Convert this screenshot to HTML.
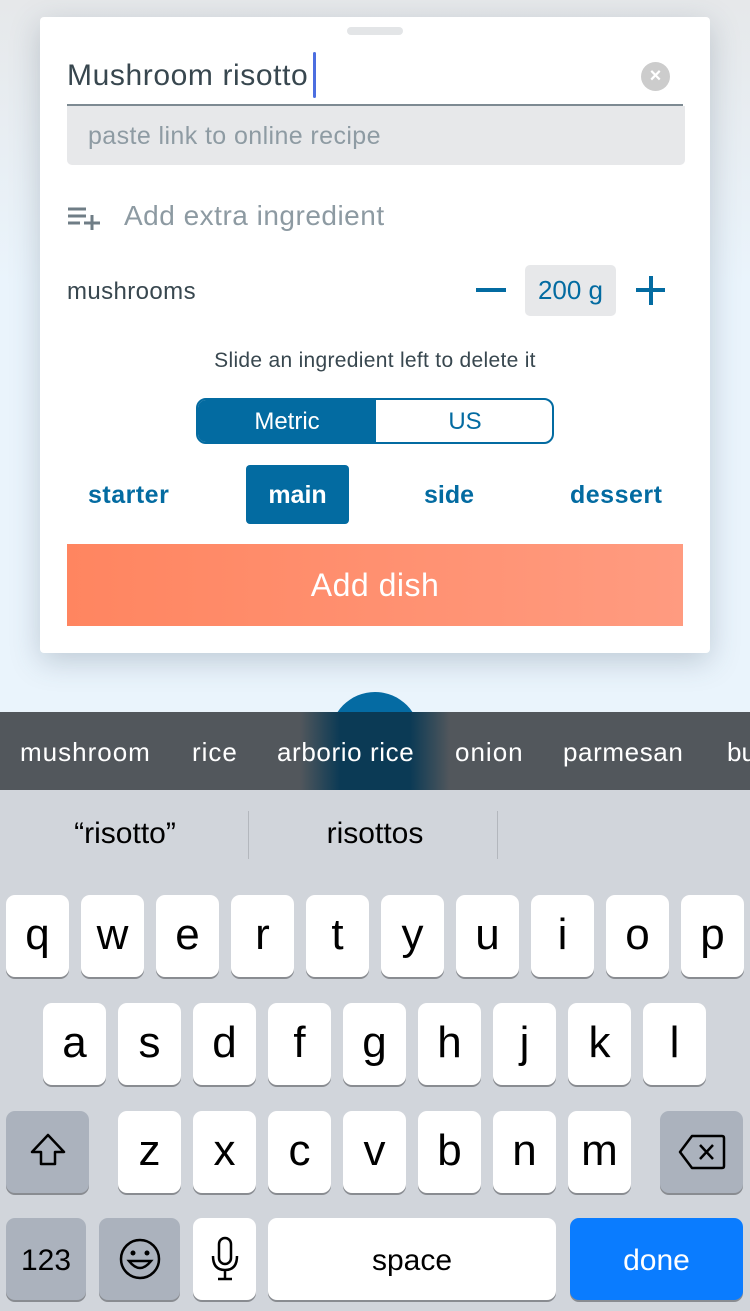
<!DOCTYPE html>
<html><head><style>
*{margin:0;padding:0;box-sizing:border-box}
body{width:750px;height:1311px;position:relative;overflow:hidden;background:#eaf3fb;font-family:"Liberation Sans",sans-serif}
.a{position:absolute}
.card{left:40px;top:17px;width:670px;height:636px;background:#fff;border-radius:4px;box-shadow:0 8px 30px rgba(60,80,100,.25)}
.k{position:absolute;background:#fff;border-radius:9px;box-shadow:0 2px 0 #898c91;text-align:center;font-size:44px;color:#000;line-height:80px;width:63px;height:82px}
.g{background:#abb2bd}
.bt{color:#036ba1;font-size:25px;font-weight:bold}
.s{position:absolute;top:737px;font-size:26px;color:#fff;white-space:nowrap}
</style></head><body>
<div class="a" style="left:0;top:0;width:750px;height:712px;background:linear-gradient(#e6e8ea,#eaf4fc 40%)"></div>
<div class="a card"></div>
<div class="a" style="left:347px;top:27px;width:56px;height:8px;border-radius:4px;background:#e3e5e7"></div>
<div class="a" style="left:67px;top:59px;font-size:30px;color:#38474f;letter-spacing:0.6px;transform:scaleX(1.0)">Mushroom risotto</div>
<div class="a" style="left:313px;top:52px;width:3px;height:46px;background:#4c6ee0;border-radius:2px"></div>
<div class="a" style="left:641px;top:62px;width:29px;height:29px;border-radius:50%;background:#ccc;color:#fff;text-align:center;font-size:20px;line-height:28px;font-weight:bold">×</div>
<div class="a" style="left:67px;top:104px;width:616px;height:2px;background:#7d8a92"></div>
<div class="a" style="left:67px;top:106px;width:618px;height:59px;background:#e7e8ea;border-radius:0 0 5px 5px"></div>
<div class="a" style="left:88px;top:122px;font-size:25px;color:#8e9ba3;letter-spacing:0.4px">paste link to online recipe</div>
<svg class="a" style="left:68px;top:206px" width="34" height="24"><g stroke="#6f7d86" stroke-width="3"><path d="M0 3H18M0 10H18M0 17H12M16 17H32M24 9V24"/></g></svg>
<div class="a" style="left:124px;top:200px;font-size:28px;color:#8d9aa2;letter-spacing:0.5px">Add extra ingredient</div>
<div class="a" style="left:67px;top:278px;font-size:24px;color:#38474f;letter-spacing:0.4px">mushrooms</div>
<div class="a" style="left:476px;top:288px;width:30px;height:4px;background:#036ba1"></div>
<div class="a" style="left:525px;top:265px;width:91px;height:51px;background:#e7e8ea;border-radius:5px;color:#036ba1;font-size:26px;text-align:center;line-height:51px">200 g</div>
<div class="a" style="left:636px;top:288px;width:29px;height:4px;background:#036ba1"></div>
<div class="a" style="left:649px;top:276px;width:4px;height:29px;background:#036ba1"></div>
<div class="a" style="left:0;top:349px;width:750px;text-align:center;font-size:21px;color:#38474f;letter-spacing:0.3px">Slide an ingredient left to delete it</div>
<div class="a" style="left:196px;top:398px;width:358px;height:46px;border:2px solid #036ba1;border-radius:10px;overflow:hidden">
<div class="a" style="left:0;top:0;width:178px;height:44px;background:#036ba1;color:#fff;text-align:center;line-height:44px;font-size:24px">Metric</div>
<div class="a" style="left:178px;top:0;width:178px;height:44px;color:#036ba1;text-align:center;line-height:44px;font-size:24px">US</div></div>
<div class="a bt" style="left:88px;top:481px;letter-spacing:0.5px">starter</div>
<div class="a bt" style="left:246px;top:465px;width:103px;height:59px;background:#036ba1;color:#fff;border-radius:4px;text-align:center;line-height:60px">main</div>
<div class="a bt" style="left:424px;top:481px">side</div>
<div class="a bt" style="left:570px;top:481px;letter-spacing:0.5px">dessert</div>
<div class="a" style="left:67px;top:544px;width:616px;height:82px;background:linear-gradient(90deg,#ff8560,#ff9b80);color:#fff;font-size:32px;text-align:center;line-height:82px;letter-spacing:0.5px">Add dish</div>
<div class="a" style="left:330px;top:692px;width:90px;height:90px;border-radius:50%;background:#056ba3"></div>
<div class="a" style="left:0;top:712px;width:750px;height:78px;background:linear-gradient(90deg,#52575c 300px,#0b3a55 340px,#0b3a55 410px,#52575c 450px)"></div>
<div class="s" style="left:20px;letter-spacing:1px">mushroom</div>
<div class="s" style="left:192px;letter-spacing:1px">rice</div>
<div class="s" style="left:277px;letter-spacing:0.6px">arborio rice</div>
<div class="s" style="left:455px;letter-spacing:1px">onion</div>
<div class="s" style="left:563px;letter-spacing:0.6px">parmesan</div>
<div class="s" style="left:727px">bu</div>
<div class="a" style="left:0;top:790px;width:750px;height:521px;background:#d1d5db"></div>
<div class="a" style="left:0;top:817px;width:250px;text-align:center;font-size:30px;color:#000">“risotto”</div>
<div class="a" style="left:250px;top:817px;width:250px;text-align:center;font-size:30px;color:#000">risottos</div>
<div class="a" style="left:248px;top:811px;width:1px;height:48px;background:#b3b7bd"></div>
<div class="a" style="left:497px;top:811px;width:1px;height:48px;background:#b3b7bd"></div>
<div class="k" style="left:6px;top:895px">q</div><div class="k" style="left:81px;top:895px">w</div><div class="k" style="left:156px;top:895px">e</div><div class="k" style="left:231px;top:895px">r</div><div class="k" style="left:306px;top:895px">t</div><div class="k" style="left:381px;top:895px">y</div><div class="k" style="left:456px;top:895px">u</div><div class="k" style="left:531px;top:895px">i</div><div class="k" style="left:606px;top:895px">o</div><div class="k" style="left:681px;top:895px">p</div>
<div class="k" style="left:43px;top:1003px">a</div><div class="k" style="left:118px;top:1003px">s</div><div class="k" style="left:193px;top:1003px">d</div><div class="k" style="left:268px;top:1003px">f</div><div class="k" style="left:343px;top:1003px">g</div><div class="k" style="left:418px;top:1003px">h</div><div class="k" style="left:493px;top:1003px">j</div><div class="k" style="left:568px;top:1003px">k</div><div class="k" style="left:643px;top:1003px">l</div>
<div class="k g" style="left:6px;top:1111px;width:83px"><svg width="40" height="40" style="margin-top:20px"><path d="M20 4L36 21H27V33H13V21H4Z" fill="none" stroke="#000" stroke-width="2.5" stroke-linejoin="round"/></svg></div>
<div class="k" style="left:118px;top:1111px">z</div><div class="k" style="left:193px;top:1111px">x</div><div class="k" style="left:268px;top:1111px">c</div><div class="k" style="left:343px;top:1111px">v</div><div class="k" style="left:418px;top:1111px">b</div><div class="k" style="left:493px;top:1111px">n</div><div class="k" style="left:568px;top:1111px">m</div>
<div class="k g" style="left:660px;top:1111px;width:83px"><svg width="48" height="36" style="margin-top:23px"><path d="M14 2H44Q46 2 46 4V32Q46 34 44 34H14L2 18Z" fill="none" stroke="#000" stroke-width="2.5" stroke-linejoin="round"/><path d="M22 11L35 25M35 11L22 25" stroke="#000" stroke-width="2.5"/></svg></div>
<div class="k g" style="left:6px;top:1218px;width:80px;font-size:30px;line-height:86px">123</div>
<div class="k g" style="left:99px;top:1218px;width:81px"><svg width="44" height="44" style="margin-top:19px"><circle cx="22" cy="22" r="19" fill="none" stroke="#000" stroke-width="2.5"/><circle cx="15" cy="16" r="2.5"/><circle cx="29" cy="16" r="2.5"/><path d="M11 24Q22 38 33 24Z" fill="none" stroke="#000" stroke-width="2.5"/></svg></div>
<div class="k" style="left:193px;top:1218px"><svg width="30" height="46" style="margin-top:18px"><rect x="9" y="2" width="12" height="26" rx="6" fill="none" stroke="#000" stroke-width="2.5"/><path d="M3 20Q3 34 15 34Q27 34 27 20M15 34V43M8 43H22" fill="none" stroke="#000" stroke-width="2.5"/></svg></div>
<div class="k" style="left:268px;top:1218px;width:288px;font-size:30px;line-height:86px">space</div>
<div class="k" style="left:570px;top:1218px;width:173px;background:#0a7cff;color:#fff;font-size:30px;line-height:86px">done</div>
</body></html>
